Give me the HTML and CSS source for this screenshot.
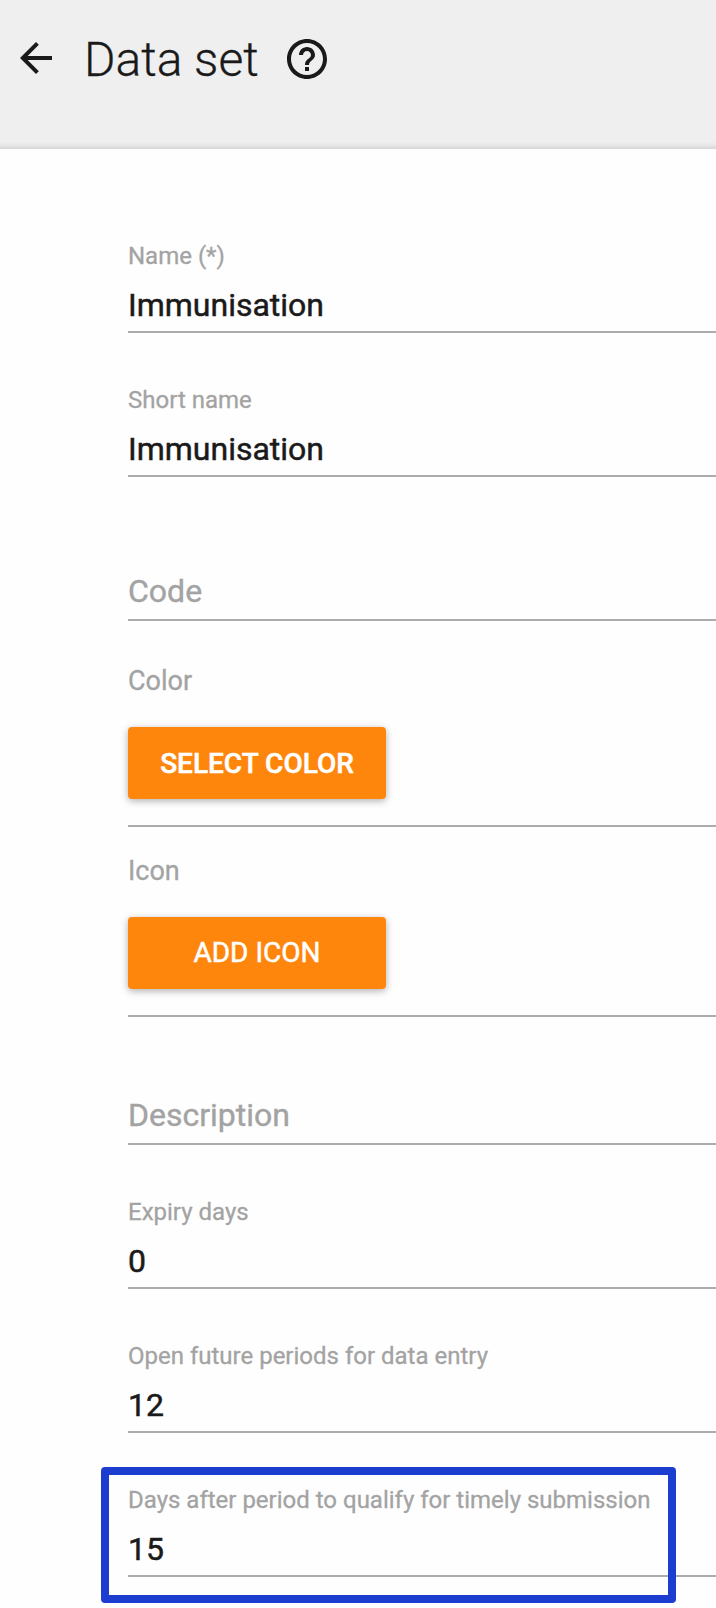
FILE: index.html
```html
<!DOCTYPE html>
<html lang="en">
<head>
<meta charset="utf-8">
<title>Data set</title>
<link rel="stylesheet" href="styles.css">
</head>
<body>
<header class="header">
  <svg class="icon" viewBox="0 0 24 24"><path d="M20 11H7.83l5.59-5.59L12 4l-8 8 8 8 1.41-1.41L7.83 13H20v-2z"/></svg>
  <h1 class="title">Data set</h1>
  <svg class="icon help" viewBox="0 0 24 24"><path d="M11 18h2v-2h-2v2zm1-16C6.48 2 2 6.48 2 12s4.480 10 10 10 10-4.480 10-10S17.520 2 12 2zm0 18c-4.410 0-8-3.590-8-8s3.590-8 8-8 8 3.590 8 8-3.590 8-8 8zm0-14c-2.210 0-4 1.790-4 4h2c0-1.100.9-2 2-2s2 .9 2 2c0 2-3 1.750-3 5h2c0-2.250 3-2.500 3-5 0-2.210-1.790-4-4-4z"/></svg>
</header>
<main class="form">
  <div class="field"><span class="label">Name (*)</span><span class="value">Immunisation</span></div>
  <div class="field"><span class="label">Short name</span><span class="value">Immunisation</span></div>
  <div class="field"><span class="placeholder">Code</span></div>
  <div class="picker color"><span class="caption">Color</span><button class="button strong">SELECT COLOR</button></div>
  <div class="picker"><span class="caption">Icon</span><button class="button">ADD ICON</button></div>
  <div class="field short"><span class="placeholder">Description</span></div>
  <div class="field"><span class="label">Expiry days</span><span class="value">0</span></div>
  <div class="field"><span class="label">Open future periods for data entry</span><span class="value">12</span></div>
  <div class="field"><span class="label">Days after period to qualify for timely submission</span><span class="value">15</span><div class="highlight"></div></div>
</main>
</body>
</html>
```
FILE: styles.css
```css
* { box-sizing: border-box; }
body {
  margin: 0;
  height: 1608px;
  overflow: hidden;
  background: #fefefe;
  font-family: Roboto, "Liberation Sans", sans-serif;
  color: #1a1a1a;
}
.header {
  height: 149px;
  padding: 31px 0 0 12px;
  display: flex;
  align-items: flex-start;
  background: linear-gradient(#efefef 0, #efefef 142px, #e8e8e8 145px, #d6d6d6 149px);
}
.icon { width: 48px; height: 48px; margin-top: 3px; fill: #1a1a1a; flex: none; }
.title { margin: 0 0 0 24px; width: 198.5px; font-size: 48px; font-weight: 300; line-height: 57px; white-space: nowrap; -webkit-text-stroke: .3px; }
.help { margin-top: 4px; }
.form { padding: 40px 0 0 128px; }
.field {
  position: relative;
  height: 144px;
  padding-bottom: 7px;
  border-bottom: 2px solid #acacac;
  display: flex;
  flex-direction: column;
  justify-content: flex-end;
}
.short { height: 128px; }
.label { margin-bottom: 16px; font-size: 24px; line-height: 28px; color: #a3a3a3; -webkit-text-stroke: .3px; }
.value { font-size: 32px; line-height: 38px; -webkit-text-stroke: .5px; }
.placeholder { margin-bottom: 2px; font-size: 32px; line-height: 38px; color: #a3a3a3; -webkit-text-stroke: .4px; }
.picker {
  height: 190px;
  padding-bottom: 26px;
  border-bottom: 2px solid #acacac;
  display: flex;
  flex-direction: column;
  justify-content: flex-end;
  align-items: flex-start;
}
.color { height: 206px; }
.caption { margin-bottom: 30px; font-size: 27px; line-height: 32px; color: #a3a3a3; -webkit-text-stroke: .3px; }
.button {
  width: 258px;
  height: 72px;
  padding: 0;
  border: 0;
  border-radius: 4px;
  background: #ff860d;
  box-shadow: 0 2px 10px rgba(0, 0, 0, .15), 0 2px 6px rgba(0, 0, 0, .18);
  font: 400 28px/72px Roboto, "Liberation Sans", sans-serif;
  color: #fff;
  -webkit-text-stroke: .5px;
}
.strong { padding-top: 2px; font-weight: 500; line-height: 70px; }
.highlight {
  position: absolute;
  left: -27px;
  top: 34px;
  width: 575px;
  height: 136px;
  border: 8px solid #1d3dd0;
  border-radius: 4px;
}
```
